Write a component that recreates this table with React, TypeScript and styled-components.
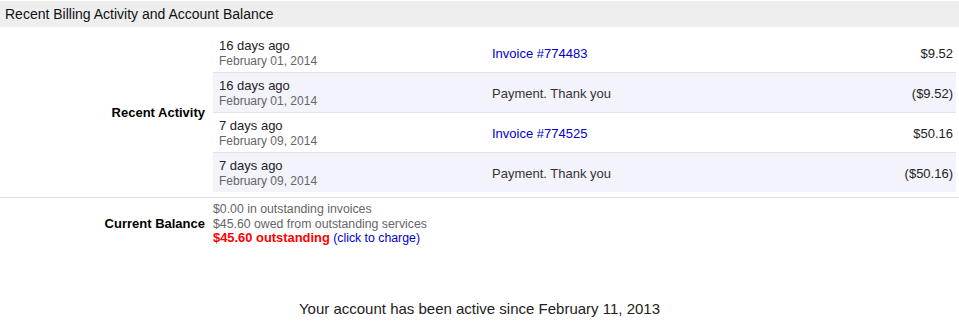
import React from "react";
import styled, { createGlobalStyle } from "styled-components";

const GlobalStyle = createGlobalStyle`
  body {
    margin: 0;
    background: #fff;
    font-family: "Liberation Sans", Arial, sans-serif;
    color: #222;
  }
`;

type Activity = {
  ago: string;
  date: string;
  description: string;
  invoice?: boolean;
  amount: string;
  shaded?: boolean;
};

const activities: Activity[] = [
  { ago: "16 days ago", date: "February 01, 2014", description: "Invoice #774483", invoice: true, amount: "$9.52" },
  { ago: "16 days ago", date: "February 01, 2014", description: "Payment. Thank you", amount: "($9.52)", shaded: true },
  { ago: "7 days ago", date: "February 09, 2014", description: "Invoice #774525", invoice: true, amount: "$50.16" },
  { ago: "7 days ago", date: "February 09, 2014", description: "Payment. Thank you", amount: "($50.16)", shaded: true },
];

const App = () => (
  <>
    <GlobalStyle />
    <Page>
      <Header>Recent Billing Activity and Account Balance</Header>

      <Section $padTop={5} $padBottom={5}>
        <Label>Recent Activity</Label>
        <ActivityList>
          {activities.map((a, i) => (
            <Row key={i} $shaded={a.shaded}>
              <When>
                <Ago>{a.ago}</Ago>
                <DateText>{a.date}</DateText>
              </When>
              {a.invoice ? (
                <InvoiceLink href="#">{a.description}</InvoiceLink>
              ) : (
                <Description>{a.description}</Description>
              )}
              <Amount>{a.amount}</Amount>
            </Row>
          ))}
        </ActivityList>
      </Section>

      <Section $padTop={4} $padBottom={0} $noBorder>
        <Label>Current Balance</Label>
        <Balance>
          <div>$0.00 in outstanding invoices</div>
          <div>$45.60 owed from outstanding services</div>
          <div>
            <Outstanding>$45.60 outstanding</Outstanding>{" "}
            <ChargeLink href="#">(click to charge)</ChargeLink>
          </div>
        </Balance>
      </Section>

      <Footer>Your account has been active since February 11, 2013</Footer>
    </Page>
  </>
);

const Page = styled.div`
  width: 959px;
  padding-top: 1px;
`;

const Header = styled.div`
  height: 26px;
  line-height: 26px;
  background: #eeeeee;
  padding-left: 5px;
  font-size: 14px;
  color: #111;
`;

const Section = styled.div<{ $padTop: number; $padBottom: number; $noBorder?: boolean }>`
  display: grid;
  grid-template-columns: 213px 1fr;
  padding-top: ${(p) => p.$padTop}px;
  padding-bottom: ${(p) => p.$padBottom}px;
  border-bottom: ${(p) => (p.$noBorder ? "none" : "1px solid #e2e2e2")};
`;

const Label = styled.div`
  align-self: center;
  text-align: right;
  padding-right: 8px;
  font-size: 13px;
  font-weight: bold;
  color: #000;
`;

const ActivityList = styled.div`
  margin-right: 3px;
`;

const Row = styled.div<{ $shaded?: boolean }>`
  display: grid;
  grid-template-columns: 279px 1fr auto;
  align-items: center;
  padding: 5px 3px 4px 0;
  background: ${(p) => (p.$shaded ? "#f3f3fb" : "#fff")};
  border-top: 1px solid #e4e4e8;

  &:first-child {
    border-top: none;
    padding-top: 6px;
  }
`;

const When = styled.div`
  padding-left: 6px;
`;

const Ago = styled.div`
  font-size: 13px;
  line-height: 16px;
  color: #222;
`;

const DateText = styled.div`
  font-size: 12px;
  line-height: 14px;
  color: #666;
`;

const Description = styled.div`
  font-size: 13px;
  color: #333;
`;

const InvoiceLink = styled.a`
  font-size: 13px;
  color: #0000cc;
  text-decoration: none;
  justify-self: start;
`;

const Amount = styled.div`
  font-size: 13px;
  color: #222;
  text-align: right;
`;

const Balance = styled.div`
  font-size: 12.3px;
  line-height: 14.5px;
  color: #666;
`;

const Outstanding = styled.span`
  font-size: 12.9px;
  color: #ff0000;
  font-weight: bold;
`;

const ChargeLink = styled.a`
  color: #0000cc;
  text-decoration: none;
`;

const Footer = styled.div`
  margin-top: 54px;
  text-align: center;
  font-size: 15px;
  line-height: 18px;
  color: #222;
`;

export default App;
